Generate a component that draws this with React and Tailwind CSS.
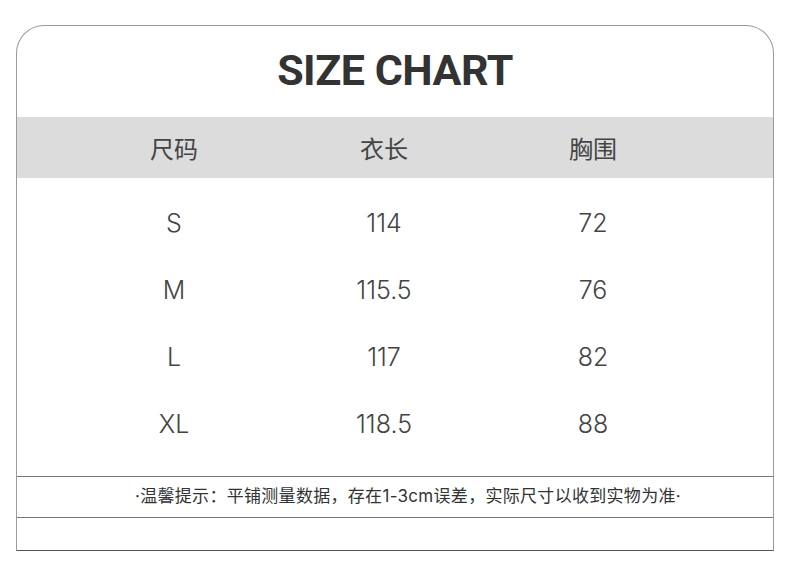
const rows = [
  { size: "S", length: "114", chest: "72" },
  { size: "M", length: "115.5", chest: "76" },
  { size: "L", length: "117", chest: "82" },
  { size: "XL", length: "118.5", chest: "88" },
];

const cjk = "font-['Inter','Noto_Sans_CJK_SC',sans-serif]";

export default function App() {
  return (
    <div className="w-[790px] h-[576px] bg-white pt-[25px] pl-[16px]">
      <div className="w-[758px] h-[526px] flex flex-col rounded-t-[28px] border border-[#9a9a9a] border-b-[#555]">
        <div className="h-[91px] flex items-center justify-center">
          <h1 className="font-['Roboto',sans-serif] font-bold text-[43px] tracking-[-0.5px] text-[#333] leading-none pb-[2px]">
            SIZE CHART
          </h1>
        </div>

        <div className={`h-[61px] bg-[#dcdcdc] flex pl-[51px] pt-[4px] text-[24px] text-[#444] ${cjk}`}>
          <div className="w-[212px] flex items-center justify-center">尺码</div>
          <div className="w-[208px] flex items-center justify-center">衣长</div>
          <div className="w-[210px] flex items-center justify-center">胸围</div>
        </div>

        <div className="flex-1 pt-[12px]">
          {rows.map((r) => (
            <div
              key={r.size}
              className="h-[67px] flex pl-[51px] font-['Inter',sans-serif] font-light text-[25px] text-[#444]"
            >
              <div className="w-[212px] flex items-center justify-center">{r.size}</div>
              <div className="w-[208px] flex items-center justify-center">{r.length}</div>
              <div className="w-[210px] flex items-center justify-center">{r.chest}</div>
            </div>
          ))}
        </div>

        <div
          className={`h-[42px] border-y border-[#777] flex items-center justify-center pl-[26px] text-[17px] tracking-[0.3px] text-[#333] ${cjk}`}
        >
          ·温馨提示：平铺测量数据，存在1-3cm误差，实际尺寸以收到实物为准·
        </div>
        <div className="h-[32px]" />
      </div>
    </div>
  );
}
